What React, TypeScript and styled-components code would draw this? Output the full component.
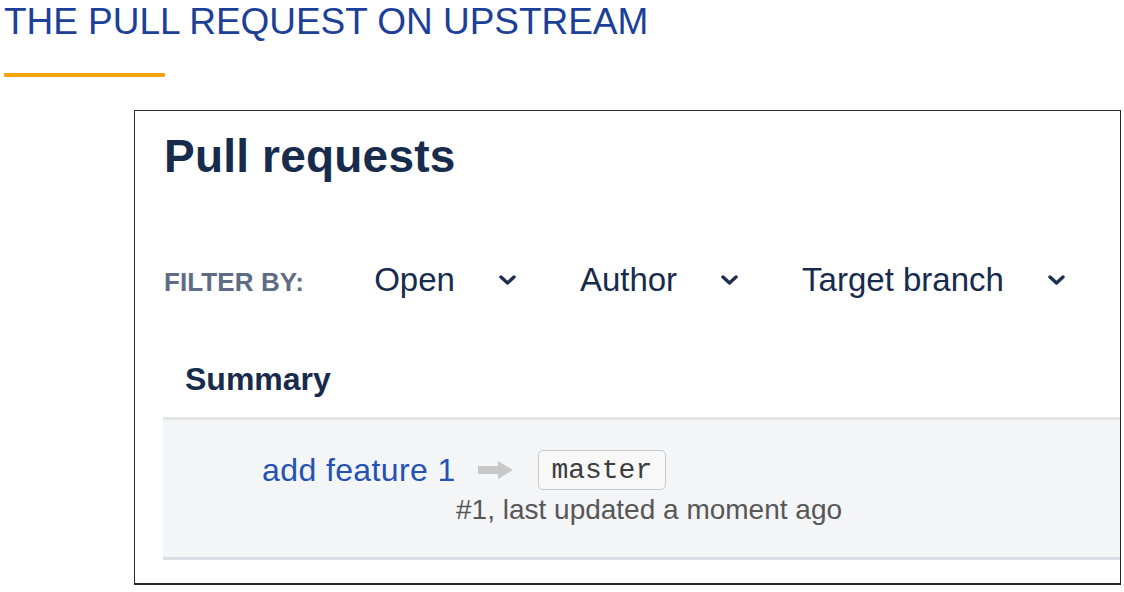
import React from "react";
import styled, { createGlobalStyle } from "styled-components";

const Global = createGlobalStyle`
  html, body { margin: 0; padding: 0; background: #ffffff; }
  body { font-family: "Liberation Sans", Arial, sans-serif; }
`;

const Page = styled.div`
  width: 1124px;
  height: 592px;
  overflow: hidden;
  display: flex;
  flex-direction: column;
  align-items: flex-start;
`;

const SlideTitle = styled.h1`
  margin: 0;
  padding-left: 4px;
  font-family: "Liberation Sans", Arial, sans-serif;
  font-weight: 400;
  font-size: 37px;
  line-height: 44px;
  color: #1c3f97;
  letter-spacing: -0.05px;
  white-space: nowrap;
`;

const Accent = styled.div`
  margin: 29px 0 0 4px;
  width: 161px;
  height: 4px;
  background: #f5a50a;
  border-radius: 1px;
`;

const Frame = styled.div`
  margin: 33px 0 0 134px;
  width: 987px;
  height: 475px;
  box-sizing: border-box;
  border: 1px solid #2a2a2a;
  border-bottom-width: 2px;
  padding: 0 0 0 28px;
  display: flex;
  flex-direction: column;
  overflow: hidden;
`;

const Heading = styled.h2`
  margin: 19px 0 0 1px;
  font-size: 46px;
  line-height: 52px;
  font-weight: 700;
  color: #172b4d;
  letter-spacing: 0.2px;
  white-space: nowrap;
`;

const FilterBar = styled.div`
  margin: 78px 0 0 1px;
  display: flex;
  align-items: baseline;
  line-height: 40px;
  white-space: nowrap;
`;

const FilterLabel = styled.span`
  flex-shrink: 0;
  font-size: 26px;
  font-weight: 700;
  color: #5e6c84;
  margin-right: 70px;
  letter-spacing: 0.1px;
`;

const Dropdown = styled.div`
  flex-shrink: 0;
  display: flex;
  align-items: baseline;
  margin-right: 64px;
  color: #172b4d;
  font-size: 33px;
`;

const DropLabel = styled.span`
  margin-right: 44px;
`;

const Chevron = styled.svg`
  width: 17px;
  height: 11px;
  align-self: center;
  flex-shrink: 0;
`;

const ColumnHead = styled.div`
  margin: 59px 0 0 22px;
  font-size: 32px;
  line-height: 36px;
  font-weight: 700;
  color: #172b4d;
`;

const Row = styled.div`
  margin-top: 20px;
  background: #f4f5f7;
  border-top: 3px solid #e4e4e6;
  border-bottom: 3px solid #dcdde4;
  padding: 30px 0 31px 99px;
  display: flex;
  flex-direction: column;
`;

const RowMain = styled.div`
  display: flex;
  align-items: center;
  height: 40px;
  white-space: nowrap;
`;

const PrLink = styled.a`
  font-size: 32px;
  line-height: 36px;
  letter-spacing: 0.4px;
  color: #2451b4;
  text-decoration: none;
  margin-right: 22px;
`;

const Arrow = styled.svg`
  width: 36px;
  height: 18px;
  margin-right: 24px;
  flex-shrink: 0;
`;

const Branch = styled.span`
  box-sizing: border-box;
  height: 40px;
  width: 128px;
  flex-shrink: 0;
  display: inline-flex;
  align-items: center;
  justify-content: center;
  border: 1.5px solid #c9c9c9;
  border-radius: 5px;
  background: #f8f8f9;
  font-family: "Liberation Mono", "Courier New", monospace;
  font-size: 28px;
  color: #3d3d3d;
  font-weight: 400;
`;

const Meta = styled.div`
  margin: 4px 0 0 194px;
  font-size: 28px;
  line-height: 32px;
  color: #575757;
  white-space: nowrap;
`;

const ChevronIcon = () => (
  <Chevron viewBox="0 0 17 11">
    <polyline
      points="2,2 8.5,8 15,2"
      fill="none"
      stroke="#1f2f4f"
      strokeWidth="3.4"
      strokeLinecap="round"
      strokeLinejoin="round"
    />
  </Chevron>
);

const filters = ["Open", "Author", "Target branch"];

export default function App() {
  return (
    <Page>
      <Global />
      <SlideTitle>THE PULL REQUEST ON UPSTREAM</SlideTitle>
      <Accent />
      <Frame>
        <Heading>Pull requests</Heading>
        <FilterBar>
          <FilterLabel>FILTER BY:</FilterLabel>
          {filters.map((f) => (
            <Dropdown key={f}>
              <DropLabel>{f}</DropLabel>
              <ChevronIcon />
            </Dropdown>
          ))}
        </FilterBar>
        <ColumnHead>Summary</ColumnHead>
        <Row>
          <RowMain>
            <PrLink href="#">add feature 1</PrLink>
            <Arrow viewBox="0 0 36 18">
              <path d="M0 5 H20 V0 L35 9 L20 18 V13 H0 Z" fill="#c8c8c8" />
            </Arrow>
            <Branch>master</Branch>
          </RowMain>
          <Meta>#1, last updated a moment ago</Meta>
        </Row>
      </Frame>
    </Page>
  );
}
